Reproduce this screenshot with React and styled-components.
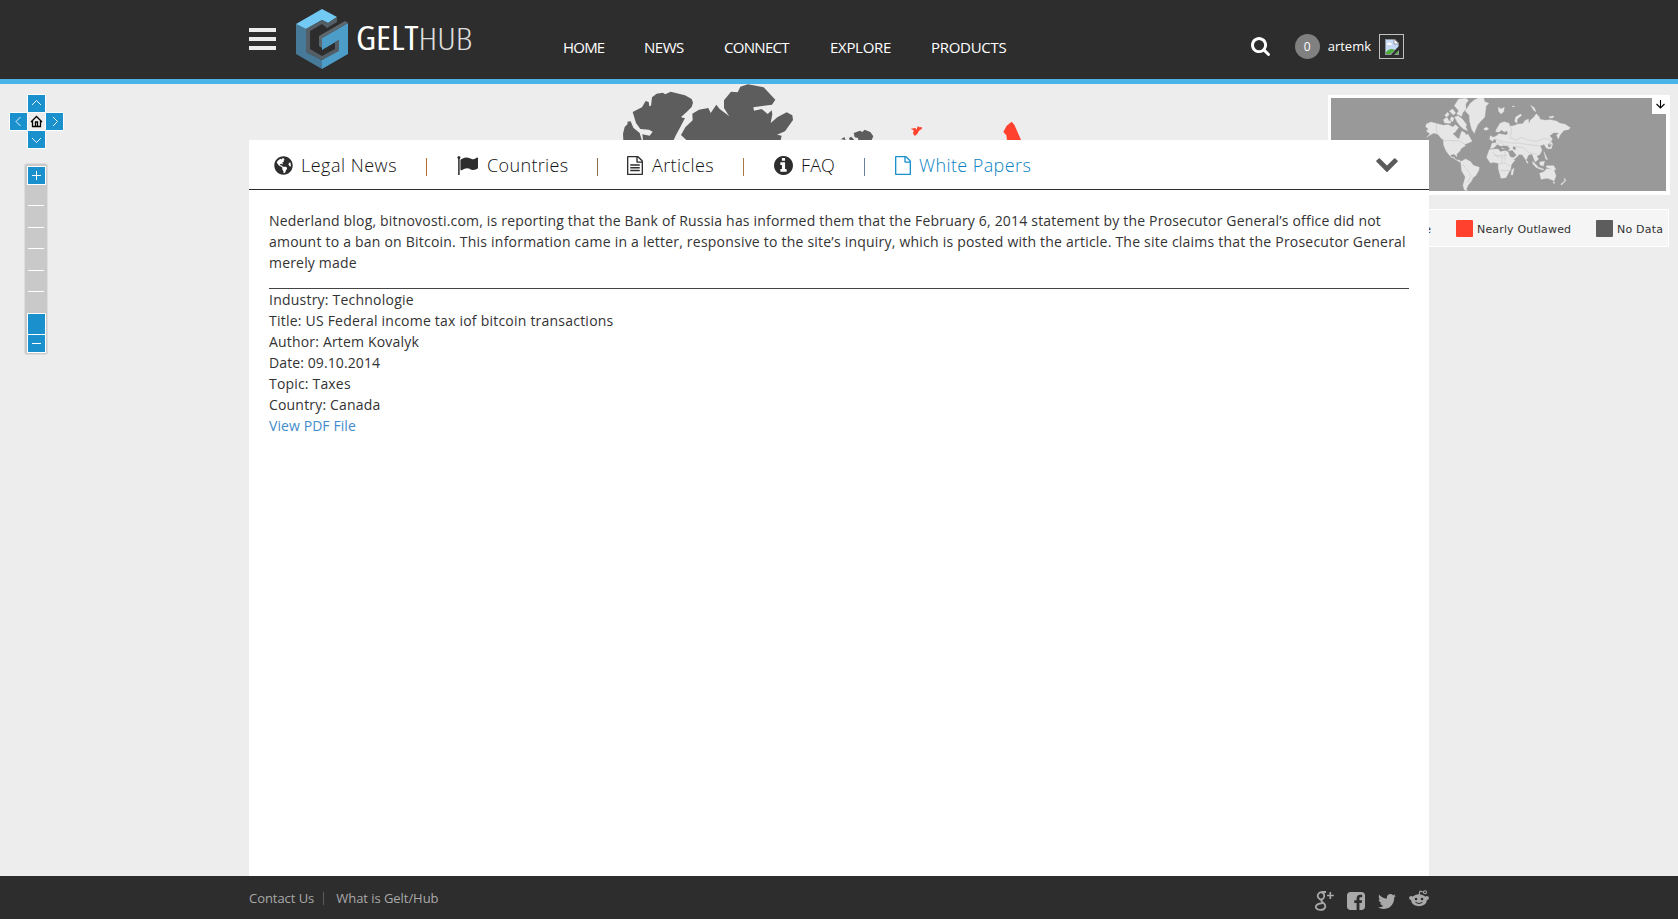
import React from "react";
import styled, { createGlobalStyle } from "styled-components";
import { FaGlobeAmericas } from "react-icons/fa";

const GlobalStyle = createGlobalStyle`
  * { box-sizing: border-box; }
  body {
    margin: 0;
    background: #ededed;
    color: #333;
    font: 14px/21px "Open Sans", sans-serif;
  }
  a { color: inherit; text-decoration: none; }
  svg { display: block; flex: none; }
`;

const Page = styled.div`
  display: flex;
  flex-direction: column;
  height: 919px;
  overflow: hidden;
`;

const Container = styled.div`
  display: flex;
  align-items: flex-start;
  width: 1180px;
  margin: 0 auto;
`;

const Header = styled.header`
  height: 84px;
  flex: none;
  background: #2d2d2d;
  border-bottom: 5px solid #49b4e7;
`;

const Burger = styled.button`
  display: flex;
  flex-direction: column;
  gap: 5px;
  width: 27px;
  margin: 28px 20px 0 0;
  padding: 0;
  border: 0;
  background: none;
`;

const Bar = styled.span`
  height: 4px;
  background: #ececec;
`;

const Logo = styled.a`
  display: flex;
  width: 180px;
  margin-top: 9px;
`;

const Wordmark = styled.span`
  display: flex;
  align-self: flex-start;
  margin: 6px 0 0 8px;
  color: #fff;
  font-size: 32px;
  font-stretch: 75%;
  line-height: 46px;
  transform: scaleX(1.16);
  transform-origin: left;
`;

const WordmarkLight = styled.span`
  color: #ddd;
  font-weight: 300;
`;

const Nav = styled.nav`
  display: flex;
  gap: 40px;
  margin: 37px 0 0 87px;
`;

const NavLink = styled.a`
  width: ${(p) => p.$width}px;
  color: #fff;
  font-size: 15px;
  line-height: 21px;
  white-space: nowrap;
  letter-spacing: ${(p) => p.$spacing || 0}px;
`;

const UserBar = styled.div`
  display: flex;
  align-items: center;
  height: 25px;
  margin: 34px 25px 0 auto;
  color: #fff;
  font-size: 13px;
`;

const Count = styled.span`
  width: 25px;
  height: 25px;
  margin: 0 8px 0 25px;
  border-radius: 50%;
  background: #808080;
  font-size: 12px;
  line-height: 25px;
  text-align: center;
`;

const Avatar = styled.span`
  width: 25px;
  height: 25px;
  margin-left: 8px;
  padding: 4px 0 0 5px;
  border: 1px solid #c0c0c0;
`;

const Main = styled.main`
  position: relative;
  flex: 1;
  display: flex;
  justify-content: center;
`;

const MapShape = styled.svg`
  position: absolute;
  left: 620px;
  top: 0;
`;

const MapControls = styled.div`
  position: absolute;
  left: 9px;
  top: 10px;
`;

const Pad = styled.div`
  display: grid;
  grid-template-columns: repeat(3, 18px);
  grid-template-rows: repeat(3, 18px);
`;

const PadButton = styled.span`
  grid-area: ${(p) => p.$area};
  width: 19px;
  height: 19px;
  border: 1px solid #fff;
  background: ${(p) => (p.$plain ? "#ededed" : "#1a90cd")};
`;

const Zoom = styled.div`
  display: flex;
  flex-direction: column;
  align-items: center;
  width: 24px;
  height: 192px;
  margin: 15px 0 0 15px;
  padding-top: 2px;
  border: 1px solid #ddd;
  border-radius: 3px;
  background: #c9c9c9;
`;

const ZoomKey = styled.span`
  flex: none;
  width: 19px;
  height: ${(p) => p.$height}px;
  margin-top: ${(p) => p.$top || 0}px;
  border: 1px solid #fff;
  background: #1a90cd;
`;

const Ticks = styled.span`
  display: flex;
  flex: none;
  flex-direction: column;
  gap: 20.5px;
  width: 16px;
  height: 128px;
  padding-top: 20px;
`;

const Tick = styled.i`
  flex: none;
  height: 1px;
  background: #fff;
`;

const MiniMap = styled.div`
  position: absolute;
  right: 8px;
  top: 11px;
  width: 342px;
  height: 100px;
  padding: 3px;
  background: #fff;
`;

const MiniToggle = styled.span`
  position: absolute;
  right: 0;
  top: 0;
  width: 18px;
  height: 19px;
  background: #fff;
`;

const Legend = styled.div`
  position: absolute;
  right: 9px;
  top: 125px;
  display: flex;
  align-items: center;
  justify-content: flex-end;
  gap: 25px;
  width: 420px;
  height: 38px;
  padding: 1px 5px 0 0;
  border: 1px solid #fff;
  background: #f5f5f5;
  font: 11px/15px "DejaVu Sans", sans-serif;
`;

const LegendItem = styled.span`
  display: flex;
  align-items: center;
  gap: 4px;
  white-space: nowrap;
`;

const LegendText = styled.span`
  width: ${(p) => p.$width}px;
  padding-top: 2px;
  text-align: ${(p) => p.$align || "left"};
  letter-spacing: ${(p) => p.$spacing || 0}px;
`;

const Swatch = styled.i`
  width: 17px;
  height: 17px;
  border-radius: 1px;
  background: ${(p) => p.$color};
`;

const Panel = styled.section`
  position: relative;
  width: 1180px;
  margin-top: 56px;
  background: #fff;
`;

const Tabs = styled.div`
  display: flex;
  align-items: flex-start;
  height: 50px;
  padding: 11px 30px 0 25px;
  border-bottom: 1px solid #2d2d2d;
  font-size: 18px;
  font-weight: 300;
  line-height: 28px;
`;

const Tab = styled.a`
  display: flex;
  flex: none;
  width: ${(p) => p.$width}px;
  color: ${(p) => (p.$active ? "#0a84c4" : "#111")};
  white-space: nowrap;
  letter-spacing: ${(p) => p.$spacing || 0}px;
`;

const TabIcon = styled.span`
  flex: none;
  width: ${(p) => p.$width}px;
  padding-top: 5px;
  color: ${(p) => (p.$active ? "#1a90cd" : "#2d2d2d")};
`;

const Divider = styled.i`
  width: 1px;
  height: 18px;
  margin: 7px ${(p) => p.$right}px 0 ${(p) => p.$left}px;
  background: ${(p) => p.$color};
`;

const Collapse = styled.span`
  margin: 0 0 0 auto;
`;

const Article = styled.article`
  padding: 20px 20px 0;
`;

const Summary = styled.p`
  margin: 0;
  padding-bottom: 15px;
  border-bottom: 1px solid #444;
`;

const Line = styled.span`
  display: block;
  white-space: nowrap;
  letter-spacing: ${(p) => p.$spacing ?? 0.18}px;
`;

const PdfLink = styled.a`
  && { color: #428bca; }
  letter-spacing: 0.08px;
`;

const Footer = styled.footer`
  flex: none;
  height: 43px;
  background: #2d2d2d;
  color: #a9a9a9;
  font-size: 13px;
`;

const FooterLinks = styled.div`
  display: flex;
  margin-top: 12px;
  line-height: 20px;
  letter-spacing: -0.05px;
`;

const FooterDivider = styled.i`
  width: 1px;
  height: 13px;
  margin: 4px 12px 0 9px;
  background: #5c5c5c;
`;

const Social = styled.div`
  display: flex;
  gap: 13px;
  margin: 14px 0 0 auto;
`;

const SocialIcon = styled.a`
  margin-top: ${(p) => p.$top}px;
`;

const Glyph = ({ d, w, h = w, box = "0 0 1792 1792" }) => (
  <svg width={w} height={h} viewBox={box} fill="currentColor" preserveAspectRatio="none">
    <path d={d} />
  </svg>
);

const SEARCH =
  "M1216 832q0-185-131.5-316.5t-316.5-131.5-316.5 131.5-131.5 316.5 131.5 316.5 316.5 131.5 316.5-131.5 131.5-316.5zm512 832q0 52-38 90t-90 38q-54 0-90-38l-343-342q-179 124-399 124-143 0-273.5-55.5t-225-150-150-225-55.5-273.5 55.5-273.5 150-225 225-150 273.5-55.5 273.5 55.5 225 150 150 225 55.5 273.5q0 220-124 399l343 343q37 37 37 90z";
const FLAG =
  "M320 256q0 72-64 110v1266q0 13-9.5 22.5t-22.5 9.5h-64q-13 0-22.5-9.5t-9.5-22.5v-1266q-64-38-64-110 0-53 37.5-90.5t90.5-37.5 90.5 37.5 37.5 90.5zm1472 64v763q0 25-12.5 38.5t-39.5 27.5q-215 116-369 116-61 0-123.5-22t-108.5-48-115.5-48-142.5-22q-192 0-464 146-17 9-33 9-26 0-45-19t-19-45v-742q0-32 31-55 21-14 79-43 236-120 421-120 107 0 200 29t219 88q38 19 88 19 54 0 117.5-21t110-47 88-47 54.5-21q26 0 45 19t19 45z";
const INFO =
  "M1152 1376v-160q0-14-9-23t-23-9h-96v-512q0-14-9-23t-23-9h-320q-14 0-23 9t-9 23v160q0 14 9 23t23 9h96v320h-96q-14 0-23 9t-9 23v160q0 14 9 23t23 9h448q14 0 23-9t9-23zm-128-896v-160q0-14-9-23t-23-9h-192q-14 0-23 9t-9 23v160q0 14 9 23t23 9h192q14 0 23-9t9-23zm640 416q0 209-103 385.5t-279.5 279.5-385.5 103-385.5-103-279.5-279.5-103-385.5 103-385.5 279.5-279.5 385.5-103 385.5 103 279.5 279.5 103 385.5z";
const FILE =
  "M1596 380q28 28 48 76t20 88v1152q0 40-28 68t-68 28h-1344q-40 0-68-28t-28-68v-1600q0-40 28-68t68-28h896q40 0 88 20t76 48zm-444-244v376h376q-10-29-22-41l-313-313q-12-12-41-22zm384 1528v-1024h-416q-40 0-68-28t-28-68v-416h-768v1536h1280z";
const FILE_TEXT =
  FILE + "M440 780h910v150h-910zM440 1030h910v150h-910zM440 1290h910v150h-910z";
const CHEVRON =
  "M1683 808l-742 741q-19 19-45 19t-45-19l-742-741q-19-19-19-45.5t19-45.5l166-165q19-19 45-19t45 19l531 531 531-531q19-19 45-19t45 19l166 165q19 19 19 45.5t-19 45.5z";
const TWITTER =
  "M1684 408q-67 98-162 167 1 14 1 42 0 130-38 259.5t-115.5 248.5-184.5 210.5-258 146-323 54.5q-271 0-496-145 35 4 78 4 225 0 401-138-105-2-188-64.5t-114-159.5q33 5 61 5 43 0 85-11-112-23-185.5-111.5t-73.5-205.5v-4q68 38 146 41-66-44-105-115t-39-154q0-88 44-163 121 149 294.5 238.5t371.5 99.5q-8-38-8-74 0-134 94.5-228.5t228.5-94.5q140 0 236 102 109-21 205-78-37 115-142 178 93-10 186-50z";
const FACEBOOK =
  "M1376 128q119 0 203.5 84.5t84.5 203.5v960q0 119-84.5 203.5t-203.5 84.5h-188v-595h199l30-232h-229v-148q0-56 23.5-84t91.5-28l122-1v-207q-63-9-178-9-136 0-217.5 80t-81.5 226v171h-200v232h200v595h-532q-119 0-203.5-84.5t-84.5-203.5v-960q0-119 84.5-203.5t203.5-84.5h960z";

const LogoArt = () => (
  <svg width="52" height="60" viewBox="0 0 52 60">
    <path d="M0 15L10 20V43L26 51V60L0 45Z" fill="#467a98" />
    <path d="M26 51L43 41V31L26 41V29L52 14V45L26 60Z" fill="#4c9dc8" />
    <path d="M0 15L26 0L41 8L32 14L26 11L10 20Z" fill="#72c9f4" />
    <path d="M10 20L26 11L32 14L41 8V13L31 19L26 15L14 22V40L26 47L39 40V33L43 31V42L26 51L10 43Z" fill="#535e66" />
    <path d="M23 27L49 12L52 14L26 29V39L23 37Z" fill="#5d676e" />
  </svg>
);

const BrokenImage = () => (
  <svg width="14" height="16" viewBox="0 0 14 16">
    <path d="M0 0H10L14 4V16H0Z" fill="#8e949c" />
    <path d="M1 1H9V5H13V8L5 15H1Z" fill="#c5d8f5" />
    <path d="M2 5Q3 2 5 4Q7 4 7 6H2Z" fill="#fff" />
    <path d="M1 15V13Q5 8 10 11L5 15Z" fill="#4fac3c" />
    <path d="M9 0V5H14Z" fill="#fff" stroke="#777" strokeWidth=".7" />
    <path d="M14 7L6 16H9L14 11Z" fill="#2d2d2d" />
    <path d="M10 15L13 12V15Z" fill="#4fac3c" />
  </svg>
);

const WorldMap = () => (
  <MapShape width="404" height="56" viewBox="240 192 1212 168">
    <g fill="#5d5d5d">
      <path d="M278 276L306 262L317 243L326 246L328 259L333 257L336 232L350 221L368 218L376 223L392 215L435 226L455 237L459 248L455 261L440 276L424 290L426 293L435 294L421 321L408 345L401 360H309L307 343L329 347L338 335L327 329L301 327L288 309Z" />
      <path d="M262 305L272 304L280 323L299 339L305 360H250L249 341L254 321L263 312Z" />
      <path d="M423 345L436 322L458 301L457 281L477 269L505 264L512 279L529 254L539 267L567 288L552 264V241L573 215L593 217L601 200L624 193L671 202L706 239L696 254L640 262L642 272L665 267L683 282L695 271L697 283L692 309L712 292L740 277L757 286L759 300L735 334L711 344L725 347L722 360H439Z" />
      <path d="M941 339L960 332L967 336L974 329L991 336L1000 349L995 360H955L954 354L944 352ZM927 354L934 350L943 360H929ZM903 358L913 351L917 360Z" />
    </g>
    <g fill="#ff412d">
      <path d="M1112 326L1126 324L1130 329L1133 319L1139 322L1145 321L1146 326L1137 332L1132 341L1125 348L1119 341L1121 331Z" />
      <path d="M1390 336L1400 317L1415 305L1423 314L1443 360H1401L1399 346Z" />
    </g>
  </MapShape>
);

const MiniWorld = () => (
  <svg width="335" height="93" viewBox="63 39 1005 279" preserveAspectRatio="none">
    <path fill="#999" d="M63 39H1068V318H63Z" />
    <g fill="#e6e6e6" stroke="#e6e6e6" strokeWidth="1">
      <path d="M349 117L363 111L381 116L400 121L415 119L428 126L437 119L446 128L438 139L428 146L441 158L447 163L451 150L455 139L463 142L469 150L474 147L486 169L475 174L464 178L466 182L454 190L449 199L440 208L441 215L432 207L421 210L424 218L432 216L436 224L447 225L455 231L449 231L434 221L420 213L409 199L401 181L400 164L392 158L384 148L371 144L359 151L350 157L360 146L349 138L355 132L347 125Z" />
      <path d="M400 104L411 97L417 108L424 107L421 115L404 114ZM404 91L413 82L418 88L410 96ZM418 78L428 72L437 84L430 90ZM434 96L444 92L457 102L470 119L467 126L473 137L461 132L450 122L441 110ZM433 62L446 42L468 40L475 46L467 57L468 72L458 83L455 94L440 87L446 77ZM424 95L432 99L428 110L421 104Z" />
      <path d="M466 78L481 55L494 44L507 38L521 39L524 50L536 55L528 64L526 82L524 97L512 109L503 119L496 136L493 145L485 133L479 109L478 91Z" />
      <path d="M522 130L530 127L536 131L530 136L522 134ZM565 66L573 72L583 67L581 80L573 87L566 79ZM614 109L617 96L632 87L635 91L622 102L621 115ZM606 64L614 63L611 66ZM662 61L673 68L678 80L671 76ZM717 95L732 93L729 98L720 99Z" />
      <path d="M452 230L467 222L482 230L490 241L508 247L506 257L497 272L490 277L483 290L475 299L469 312L472 317L463 315L459 301L466 276L455 257Z" />
      <path d="M541 191L546 175L558 173L559 166L552 162L548 169L539 163L541 152L550 157L559 153L567 146L576 148L588 150L594 146L591 137L583 141L575 135L567 141L557 140L560 132L570 115L583 110L597 115L600 124L611 122L625 117L639 116L644 107L655 102L657 116L661 106L671 97L679 86L688 96L690 103L706 106L720 104L739 108L750 115L765 118L781 128L775 134L762 136L750 150L745 162L740 151L747 143L731 143L719 152L727 162L720 174L713 178L716 189L709 189L702 178L690 183L696 195L690 208L680 214L686 222L676 231L672 222L666 207L656 209L648 226L637 209L628 208L618 218L606 226L600 216L610 218L620 211L607 195L597 197L588 190L577 191L572 183L562 178L552 188Z" />
      <path d="M538 194L547 193L564 192L571 200L585 197L594 200L603 222L615 225L604 239L602 253L597 261L588 278L573 280L565 251L565 235L551 232L541 234L530 217Z" />
      <path d="M605 256L612 249L608 270L603 269ZM648 226L655 232L651 235ZM668 229L684 245L680 249L668 236ZM689 231L704 229L700 243L690 240ZM683 246L702 253L699 255L683 250ZM710 242L731 242L738 254L722 252L708 246ZM689 265L702 260L710 251L723 253L731 251L738 273L732 288L720 282L710 280L693 283ZM729 291L735 291L732 296ZM763 279L768 286L755 300L752 298L764 288ZM702 200L708 214L713 224L707 222ZM711 191L722 185L726 177L718 179L724 170L728 177L724 191Z" />
    </g>
    <path d="M380 112V149M400 167H446L465 178M457 237L468 250L483 272L472 294M548 201L561 216H578L575 233M553 211H592M567 237L585 233L601 244M571 257H600M585 200V227M552 161L580 170L597 174L625 174L649 178L690 183M597 114L605 135L600 159L620 165L633 157L650 164L680 169L702 160L720 165M555 178L572 171L586 183L602 182M610 184L641 188L655 203L681 208" fill="none" stroke="#c2c2c2" strokeWidth="1.5" />
    <path d="M566 186L581 190L595 195L600 191L592 183L579 182ZM610 184L618 189L615 196L608 190ZM446 128L438 139L446 147L454 136Z" fill="#999" />
  </svg>
);

const GooglePlus = () => (
  <svg width="19" height="20" viewBox="0 0 19 20" fill="none" stroke="currentColor">
    <path d="M11 1H7.5C4 1 2.5 3 2.7 5.2C3 8 6 9.3 8 7.8C10.5 5.8 9 1.5 6.7 1.5" strokeWidth="1.8" />
    <path d="M6.5 8.5C5.5 10 7 10.7 8.5 12C12 15 10 18.9 5.5 18.9C1 18.9 0 16.3 1.5 14.2C3 12.3 5.5 12.2 8 12" strokeWidth="1.8" />
    <path d="M15.3 1V8M12 4.5H18.8" strokeWidth="1.6" />
  </svg>
);

const Reddit = () => (
  <svg width="20" height="17" viewBox="0 0 20 17">
    <ellipse cx="10" cy="10.3" rx="7.8" ry="6" fill="currentColor" />
    <circle cx="2.2" cy="8" r="2.1" fill="currentColor" />
    <circle cx="17.8" cy="8" r="2.1" fill="currentColor" />
    <path d="M10 5L11 1.2L14.5 2" fill="none" stroke="currentColor" strokeWidth="1.1" />
    <circle cx="16" cy="2.2" r="1.5" fill="none" stroke="currentColor" strokeWidth="1.1" />
    <circle cx="7" cy="9" r="1.3" fill="#2d2d2d" />
    <circle cx="13" cy="9" r="1.3" fill="#2d2d2d" />
    <path d="M6.5 12.3Q10 15 13.5 12.3" fill="none" stroke="#2d2d2d" strokeWidth="1" />
  </svg>
);

const arrows = [
  ["1 / 2", "M5 11L9.5 6.5L14 11"],
  ["2 / 1", "M11.5 5L7 9.5L11.5 14"],
  ["2 / 3", "M8 5L12.5 9.5L8 14"],
  ["3 / 2", "M5 8L9.5 12.5L14 8"],
];

const Stroke = ({ d, color = "#fff", width = 0.9, w = 17, h = 17, box = "1 1 17 17" }) => (
  <svg width={w} height={h} viewBox={box}>
    <path d={d} fill="none" stroke={color} strokeWidth={width} />
  </svg>
);

export default function App() {
  return (
    <Page>
      <GlobalStyle />
      <Header>
        <Container>
          <Burger aria-label="Menu"><Bar /><Bar /><Bar /></Burger>
          <Logo href="#">
            <LogoArt />
            <Wordmark>GELT<WordmarkLight>HUB</WordmarkLight></Wordmark>
          </Logo>
          <Nav>
            <NavLink href="#" $width={41} $spacing={-0.8}>HOME</NavLink>
            <NavLink href="#" $width={40} $spacing={-0.5}>NEWS</NavLink>
            <NavLink href="#" $width={66} $spacing={-0.7}>CONNECT</NavLink>
            <NavLink href="#" $width={61} $spacing={-0.3}>EXPLORE</NavLink>
            <NavLink href="#" $width={77} $spacing={-0.3}>PRODUCTS</NavLink>
          </Nav>
          <UserBar>
            <Glyph d={SEARCH} w={19} h={19} box="64 128 1664 1664" />
            <Count>0</Count>
            artemk
            <Avatar><BrokenImage /></Avatar>
          </UserBar>
        </Container>
      </Header>
      <Main>
        <WorldMap />
        <MapControls>
          <Pad>
            {arrows.map(([area, d]) => (
              <PadButton key={area} $area={area}><Stroke d={d} /></PadButton>
            ))}
            <PadButton $area="2 / 2" $plain>
              <Stroke d="M4 10L9.5 4.5L15 10M5.5 9V14.5H13.5V9M8.5 14V10H10.5V14" color="#000" width={1.3} />
            </PadButton>
          </Pad>
          <Zoom>
            <ZoomKey $height={19}><Stroke d="M5 9.5H14M9.5 5V14" width={1} /></ZoomKey>
            <Ticks><Tick /><Tick /><Tick /><Tick /><Tick /></Ticks>
            <ZoomKey $height={22} />
            <ZoomKey $height={19} $top={-1}><Stroke d="M5 9.5H14" width={1} /></ZoomKey>
          </Zoom>
        </MapControls>
        <MiniMap>
          <MiniWorld />
          <MiniToggle>
            <Stroke d="M8.5 5V13M4.5 9L8.5 13L12.5 9" color="#000" width={1.1} w={18} h={19} box="0 0 18 19" />
          </MiniToggle>
        </MiniMap>
        <Legend>
          <LegendItem><Swatch $color="#f5a623" /><LegendText $width={60} $align="right">Hostile</LegendText></LegendItem>
          <LegendItem><Swatch $color="#ff412d" /><LegendText $width={94} $spacing={0.16}>Nearly Outlawed</LegendText></LegendItem>
          <LegendItem><Swatch $color="#5d5d5d" /><LegendText $width={46} $spacing={0.2}>No Data</LegendText></LegendItem>
        </Legend>
        <Panel>
          <Tabs>
            <Tab href="#" $width={124} $spacing={0.5}>
              <TabIcon $width={27}><FaGlobeAmericas size={19} /></TabIcon>Legal News
            </Tab>
            <Divider $left={28} $right={30} $color="#b5712f" />
            <Tab href="#" $width={112} $spacing={0.35}>
              <TabIcon $width={30}><Glyph d={FLAG} w={21} h={19} box="32 128 1760 1536" /></TabIcon>Countries
            </Tab>
            <Divider $left={28} $right={29} $color="#8a6a48" />
            <Tab href="#" $width={87} $spacing={0.4}>
              <TabIcon $width={25}><Glyph d={FILE_TEXT} w={16} h={19} box="128 0 1536 1792" /></TabIcon>Articles
            </Tab>
            <Divider $left={29} $right={30} $color="#a87840" />
            <Tab href="#" $width={61} $spacing={0.1}>
              <TabIcon $width={27}><Glyph d={INFO} w={19} box="128 128 1536 1536" /></TabIcon>FAQ
            </Tab>
            <Divider $left={29} $right={30} $color="#6a7f99" />
            <Tab href="#" $width={140} $active $spacing={0.4}>
              <TabIcon $width={24} $active><Glyph d={FILE} w={16} h={19} box="128 0 1536 1792" /></TabIcon>White Papers
            </Tab>
            <Collapse>
              <svg width="24" height="24" viewBox="0 0 1792 1792" fill="#5a5a5a"><path d={CHEVRON} /></svg>
            </Collapse>
          </Tabs>
          <Article>
            <Summary>
              <Line $spacing={0.19}>Nederland blog, bitnovosti.com, is reporting that the Bank of Russia has informed them that the February 6, 2014 statement by the Prosecutor General’s office did not</Line>
              <Line $spacing={0.218}>amount to a ban on Bitcoin. This information came in a letter, responsive to the site’s inquiry, which is posted with the article. The site claims that the Prosecutor General</Line>
              <Line>merely made</Line>
            </Summary>
            <Line $spacing={0.22}>Industry: Technologie</Line>
            <Line $spacing={0.22}>Title: US Federal income tax iof bitcoin transactions</Line>
            <Line>Author: Artem Kovalyk</Line>
            <Line $spacing={0.1}>Date: 09.10.2014</Line>
            <Line>Topic: Taxes</Line>
            <Line>Country: Canada</Line>
            <PdfLink href="#">View PDF File</PdfLink>
          </Article>
        </Panel>
      </Main>
      <Footer>
        <Container>
          <FooterLinks>
            <a href="#">Contact Us</a>
            <FooterDivider />
            <a href="#">What is Gelt/Hub</a>
          </FooterLinks>
          <Social>
            <SocialIcon $top={1}><GooglePlus /></SocialIcon>
            <SocialIcon $top={2}><Glyph d={FACEBOOK} w={18} box="128 128 1536 1536" /></SocialIcon>
            <SocialIcon $top={4}><Glyph d={TWITTER} w={18} h={15} box="108 256 1576 1280" /></SocialIcon>
            <SocialIcon $top={0}><Reddit /></SocialIcon>
          </Social>
        </Container>
      </Footer>
    </Page>
  );
}
